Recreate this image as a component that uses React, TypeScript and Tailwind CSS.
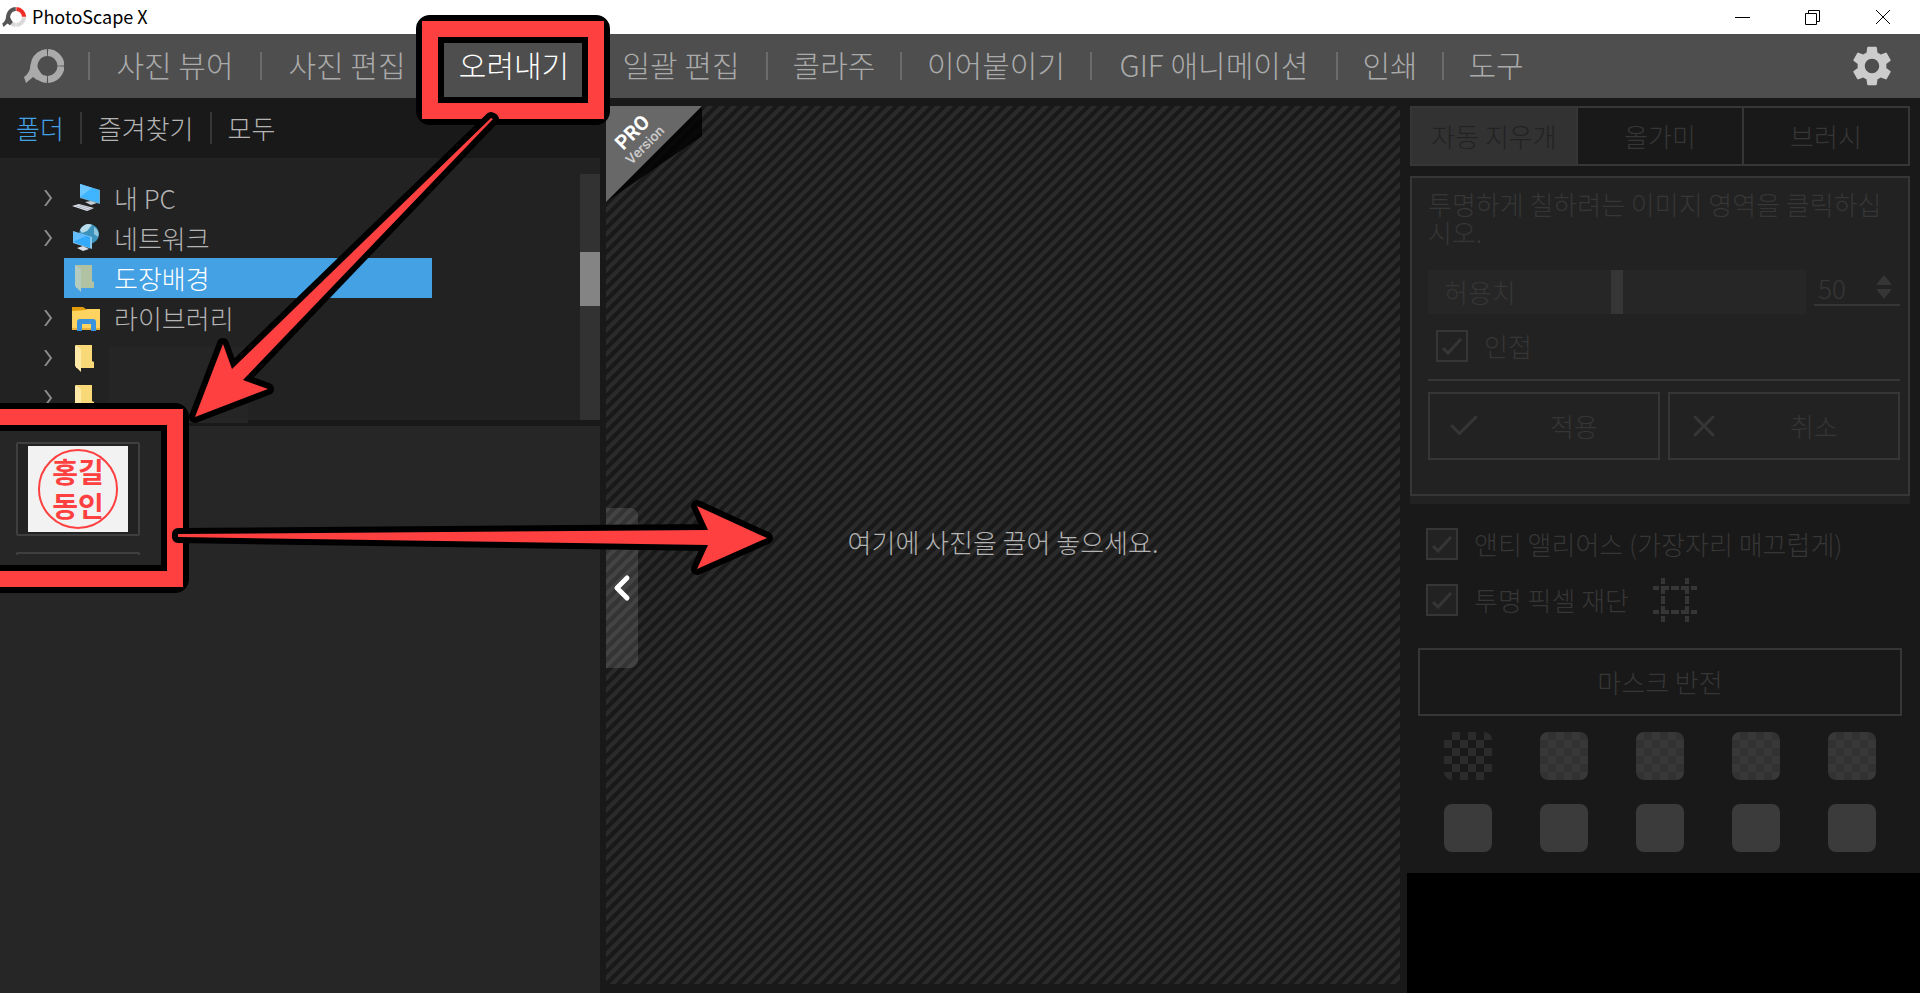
import { useState } from "react";
import { Check, ChevronLeft, X } from "lucide-react";
import { MdSettings } from "react-icons/md";

const menu = [
  { label: "사진 뷰어", width: "w-[172px]" },
  { label: "사진 편집", width: "w-[172px]" },
  { label: "오려내기", width: "w-[162px]" },
  { label: "일괄 편집", width: "w-[172px]" },
  { label: "콜라주", width: "w-[134px]" },
  { label: "이어붙이기", width: "w-[190px]" },
  { label: "GIF 애니메이션", width: "w-[246px]" },
  { label: "인쇄", width: "w-[106px]" },
  { label: "도구", width: "w-[106px]" },
];

const tree = [
  { label: "내 PC", icon: "pc", open: true },
  { label: "네트워크", icon: "network", open: true },
  { label: "도장배경", icon: "folder", open: false },
  { label: "라이브러리", icon: "library", open: true },
  { label: "", icon: "folder", open: true },
  { label: "", icon: "folder", open: true },
];

const tools = ["자동 지우개", "올가미", "브러시"];

function Logo({ className, colors }: { className: string; colors: string[] }) {
  return (
    <svg viewBox="0 0 40 34" className={className} aria-hidden>
      <g fill="none" strokeWidth="7">
        <path d="M24 3.500A13.500 13.500 0 0 1 37 16.500" stroke={colors[1]} />
        <path d="M37 17.500A13.500 13.500 0 0 1 24 30.500" stroke={colors[2]} />
        <path d="M23 30.500A13.500 13.500 0 0 1 13.500 26" stroke={colors[2]} />
        <path d="M23 3.500A13.500 13.500 0 0 0 14 26.500" stroke={colors[0]} />
      </g>
      <path d="M6.500 16Q6 24 0 28L2 34L9 28L13 31L18 26L13 18Z" fill={colors[0]} />
    </svg>
  );
}

function TreeIcon({ type, faded }: { type: string; faded: boolean }) {
  if (type === "pc") {
    return (
      <svg viewBox="0 0 28 28" className="h-7 w-7" aria-hidden>
        <path d="M8 0L28 6V20L8 14Z" fill="#6fa9c9" />
        <path d="M8 0L27 6V19L8 13Z" fill="#3fb4ff" />
        <path d="M8 0L20 4L8 13Z" fill="#6cc6ff" />
        <path d="M13 18L19 17L25 19L19 21Z" fill="#c6ccd6" />
        <path d="M0 22L7 20L22 24L15 27Z" fill="#e3e6ee" />
        <path d="M4 22L17 26M7 21L20 25" stroke="#a6adba" />
      </svg>
    );
  }
  if (type === "network") {
    return (
      <svg viewBox="0 0 28 28" className="h-7 w-7" aria-hidden>
        <circle cx="17" cy="10" r="10" fill="#3c93bd" />
        <path d="M8 6C11 0 17 -1 20 1L15 7L10 9Z" fill="#b7dbe8" />
        <path d="M22 3C27 6 27 10 26 13L22 10Z" fill="#90c7dc" />
        <path d="M1 7L20 13V25L1 19Z" fill="#8ac8ee" />
        <path d="M1 8L18 13V24L1 18Z" fill="#35a9fa" />
        <path d="M1 8L14 12L1 18Z" fill="#62bdff" />
        <path d="M5 24L11 22L17 25L11 27Z" fill="#d9dde6" />
      </svg>
    );
  }
  if (type === "library") {
    return (
      <svg viewBox="0 0 28 28" className="h-7 w-7" aria-hidden>
        <path d="M0 3H11L14 5V8H0Z" fill="#e29c0b" />
        <path d="M0 7L13 6L15 5H28V26H0Z" fill="#ffd35f" />
        <path d="M0 24H28V26H0Z" fill="#e8b23a" />
        <path d="M5 27V18Q5 15 8 15H21Q24 15 24 18V27H19V20H10V27Z" fill="#3a93dc" />
      </svg>
    );
  }
  return (
    <svg viewBox="0 0 28 28" className={faded ? "h-7 w-7 opacity-60" : "h-7 w-7"} aria-hidden>
      <path d="M4 1H20V17L22 18V24H4Z" fill="#f9d877" />
      <path d="M3 1L9 5V28L3 22Z" fill="#ffe9a8" />
    </svg>
  );
}

function Tick({ id, label }: { id: string; label: string }) {
  return (
    <div className="flex items-center gap-4">
      <span className="grid h-8 w-8 shrink-0">
        <input
          id={id}
          type="checkbox"
          defaultChecked
          className="peer col-start-1 row-start-1 h-8 w-8 appearance-none border-2 border-[#363636] bg-[#222222]"
        />
        <svg
          viewBox="0 0 32 32"
          className="pointer-events-none invisible col-start-1 row-start-1 h-8 w-8 peer-checked:visible"
          aria-hidden
        >
          <path d="M7 18L12 23L25 9" fill="none" stroke="#363636" strokeWidth="3" />
        </svg>
      </span>
      <label htmlFor={id}>{label}</label>
    </div>
  );
}

function Browser() {
  return (
    <aside className="relative mr-1.5 flex w-[600px] shrink-0 flex-col text-[26px] leading-8 font-light text-[#b4b4b4]">
      <div className="flex h-[60px] items-center gap-4 pl-4">
        <button className="text-[#44a1e4]">폴더</button>
        <span className="h-8 w-0.5 bg-[#363636]" />
        <button>즐겨찾기</button>
        <span className="h-8 w-0.5 bg-[#363636]" />
        <button>모두</button>
      </div>
      <div className="flex h-[262px] overflow-hidden bg-[#222222] pt-4">
        <ul className="min-w-0 flex-1 pt-1">
          {tree.map((item, i) => {
            const selected = item.label === "도장배경";
            return (
              <li key={i} className="flex h-10 items-center">
                <span className="flex w-16 justify-end pr-3">
                  {item.open && (
                    <svg viewBox="0 0 8 16" className="h-4 w-2" aria-hidden>
                      <path d="M1 0L7 8L1 16" fill="none" stroke="#8c8c8c" strokeWidth="2" />
                    </svg>
                  )}
                </span>
                <button
                  className={
                    selected
                      ? "flex h-10 w-[368px] items-center gap-3.5 bg-[#44a1e4] pl-2 text-white"
                      : "flex h-10 w-[368px] items-center gap-3.5 pl-2"
                  }
                >
                  <TreeIcon type={item.icon} faded={selected} />
                  {item.label}
                </button>
              </li>
            );
          })}
        </ul>
        <div className="w-5 bg-[#323232] pt-[78px]">
          <div className="h-[54px] bg-[#848484]" />
        </div>
      </div>
      <div className="mt-1.5 flex-1 bg-[#262626] px-4 pt-4">
        <figure className="flex h-[94px] w-[124px] items-center justify-center rounded-xs border-2 border-[#3f3f3f] bg-[#222222]">
          <div className="flex h-[86px] w-[100px] items-center justify-center bg-[#f2f2f2]">
            <div className="flex h-20 w-20 flex-col items-center justify-center rounded-full border-2 border-[#ff4040] pt-1 font-['Liberation_Sans','Noto_Sans_CJK_KR',sans-serif] text-[28px] leading-[34px] font-bold text-[#ff4040]">
              <span>홍길</span>
              <span>동인</span>
            </div>
          </div>
        </figure>
        <div className="mt-4 h-[3px] w-[124px] rounded-t-xs border-2 border-b-0 border-[#3f3f3f]" />
      </div>
      {/* patch that hides the private folder names */}
      <div className="absolute top-[249px] left-[109px] h-[76px] w-[139px] bg-[#252525]" />
    </aside>
  );
}

function Canvas() {
  return (
    <main className="relative mt-2 mr-[7px] mb-[9px] flex min-w-0 flex-1 items-center justify-center bg-[linear-gradient(135deg,#191919_25%,#2a2a2a_25%,#2a2a2a_50%,#191919_50%,#191919_75%,#2a2a2a_75%)] bg-size-[12px_12px]">
      <svg viewBox="0 0 96 96" className="absolute top-0 left-0 h-24 w-24" aria-hidden>
        <path d="M96 0V30L0 96Z" fill="#000000" fillOpacity="0.8" />
        <path d="M0 0H96L0 96Z" fill="#686868" />
        <g
          transform="rotate(-45)"
          textAnchor="middle"
          className="font-['Roboto',sans-serif]"
        >
          <text x="0" y="44" fill="#ffffff" className="text-[20px] font-bold">
            PRO
          </text>
          <text x="0" y="60" fill="#cccccc" className="text-[14px] font-medium">
            Version
          </text>
        </g>
      </svg>
      <p className="pb-2 text-[26px] font-light text-[#b4b4b4]">여기에 사진을 끌어 놓으세요.</p>
      <button
        aria-label="패널 접기"
        className="absolute top-[402px] left-0 flex h-40 w-8 items-center justify-center rounded-r-lg bg-white/12 text-white"
      >
        <ChevronLeft className="h-10 w-10 shrink-0" strokeWidth={3} />
      </button>
    </main>
  );
}

function Settings() {
  const [tool, setTool] = useState(tools[0]);

  return (
    <aside className="flex w-[513px] shrink-0 flex-col text-[26px] leading-7 font-light text-[#363636]">
      <div className="pt-2 pr-2.5 pl-[3px]">
        <div className="grid h-[60px] grid-cols-3 gap-0.5 border-2 border-[#363636] bg-[#363636]">
          {tools.map((name) => (
            <button
              key={name}
              onClick={() => setTool(name)}
              className={name === tool ? "bg-[#323232] text-[#222222]" : "bg-[#191919]"}
            >
              {name}
            </button>
          ))}
        </div>

        <section className="mt-2.5 border-b-8 border-[#222222]">
          <div className="h-80 border-2 border-[#363636] bg-[#222222] pt-3 pr-2 pl-4">
            <p className="h-20 break-all">
              투명하게 칠하려는 이미지 영역을 클릭하십시오.
            </p>
            <div className="flex gap-2">
              <div className="relative h-11 flex-1">
                <input
                  id="tolerance"
                  type="range"
                  defaultValue={50}
                  className="block h-11 w-full appearance-none bg-[#262626] [&::-webkit-slider-thumb]:h-11 [&::-webkit-slider-thumb]:w-3 [&::-webkit-slider-thumb]:appearance-none [&::-webkit-slider-thumb]:bg-[#363636]"
                />
                <label htmlFor="tolerance" className="pointer-events-none absolute top-2 left-4">
                  허용치
                </label>
              </div>
              <div className="flex h-9 w-[86px] items-center justify-between border-b-2 border-[#363636] pr-2 pl-1">
                <input
                  aria-label="허용치 값"
                  type="number"
                  defaultValue={50}
                  className="h-8 w-12 appearance-none bg-transparent [-moz-appearance:textfield] [&::-webkit-inner-spin-button]:appearance-none"
                />
                <svg viewBox="0 0 16 24" className="h-6 w-4 shrink-0" fill="#363636" aria-hidden>
                  <path d="M8 0L16 10H0Z" />
                  <path d="M8 24L16 14H0Z" />
                </svg>
              </div>
            </div>
            <div className="mt-4 mb-[17px] pl-2">
              <Tick id="adjacent" label="인접" />
            </div>
            <div className="grid grid-cols-2 gap-2 border-t-2 border-[#363636] pt-[11px]">
              <button className="flex h-17 items-center border-2 border-[#363636] pl-4">
                <Check className="h-9 w-9" strokeWidth={2} />
                <span className="flex-1 pl-2">적용</span>
              </button>
              <button className="flex h-17 items-center border-2 border-[#363636] pl-4">
                <X className="h-9 w-9" strokeWidth={2} />
                <span className="flex-1 pl-2">취소</span>
              </button>
            </div>
          </div>
        </section>

        <div className="mt-6 flex flex-col gap-6 pl-4">
          <Tick id="antialias" label="앤티 앨리어스 (가장자리 매끄럽게)" />
          <div className="flex h-8 items-center gap-6">
            <Tick id="trim" label="투명 픽셀 재단" />
            <svg viewBox="0 0 44 44" className="h-11 w-11" fill="#363636" aria-hidden>
              <path d="M8 0h4v6h-4zM32 0h4v6h-4zM8 38h4v6h-4zM32 38h4v6h-4z" />
              <path d="M0 8h6v4H0zM38 8h6v4h-6zM0 32h6v4H0zM38 32h6v4h-6z" />
              <path d="M8 8h8v4h-4v4H8zM28 8h8v8h-4v-4h-4zM8 28h4v4h4v4H8zM32 28h4v8h-8v-4h4z" />
              <path d="M18 8h8v4h-8zM18 32h8v4h-8zM8 18h4v8H8zM32 18h4v8h-4z" />
            </svg>
          </div>
        </div>

        <div className="px-2 pt-8">
          <button className="h-17 w-full border-2 border-[#363636]">마스크 반전</button>
          <div className="grid grid-cols-5 gap-y-6 px-0.5 pt-4 pb-[21px]">
            {Array.from({ length: 10 }, (_, i) => (
              <button
                key={i}
                aria-label={`배경 ${i + 1}`}
                className={
                  i === 0
                    ? "mx-auto h-12 w-12 rounded-lg bg-[conic-gradient(#2b2b2b_25%,#191919_25%,#191919_50%,#2b2b2b_50%,#2b2b2b_75%,#191919_75%)] bg-size-[16px_16px]"
                    : i < 5
                      ? "mx-auto h-12 w-12 rounded-lg bg-[conic-gradient(#323232_25%,#383838_25%,#383838_50%,#323232_50%,#323232_75%,#383838_75%)] bg-size-[16px_16px]"
                      : "mx-auto h-12 w-12 rounded-lg bg-[#3b3b3b]"
                }
              />
            ))}
          </div>
        </div>
      </div>
      <div className="flex-1 bg-black" />
    </aside>
  );
}

/* Red frames and arrows of the tutorial, drawn over the window */
function Annotations() {
  return (
    <svg
      viewBox="0 0 800 610"
      className="pointer-events-none absolute top-0 left-0 h-[610px] w-[800px]"
      aria-hidden
    >
      <g fill="none" strokeLinejoin="round">
        <rect x="430" y="29" width="166" height="82" stroke="#000000" strokeWidth="28" />
        <rect x="430" y="29" width="166" height="82" stroke="#ff4040" strokeWidth="16" strokeLinejoin="miter" />
        <rect x="-20" y="417" width="195" height="162" stroke="#000000" strokeWidth="28" />
        <rect x="-20" y="417" width="195" height="162" stroke="#ff4040" strokeWidth="16" strokeLinejoin="miter" />
      </g>
      <g stroke="#000000" strokeWidth="12" strokeLinejoin="round">
        <path d="M491 118L232 369L223 344L195 417L268 389L243 380L493 119Z" />
        <path d="M178 534L708 530L697 506L767 538L697 569L708 545L178 537Z" />
      </g>
      <g fill="#ff4040">
        <path d="M491 118L232 369L223 344L195 417L268 389L243 380L493 119Z" />
        <path d="M178 534L708 530L697 506L767 538L697 569L708 545L178 537Z" />
      </g>
    </svg>
  );
}

export default function App() {
  const [active, setActive] = useState("오려내기");

  return (
    <div className="relative flex min-h-screen flex-col bg-[#191919] font-['Noto_Sans_CJK_KR',sans-serif]">
      <header className="flex h-[34px] items-center bg-white text-black">
        <Logo className="ml-0.5 h-5 w-6" colors={["#555555", "#ee2e24", "#d9d9d9"]} />
        <h1 className="ml-1.5 flex-1 pb-0.5 text-lg">PhotoScape X</h1>
        <button aria-label="최소화" className="w-[70px]">
          <svg viewBox="0 0 16 16" className="mx-auto h-4 w-4" aria-hidden>
            <path d="M0 8.500H15" stroke="currentColor" />
          </svg>
        </button>
        <button aria-label="이전 크기로" className="w-[70px]">
          <svg viewBox="0 0 16 16" className="mx-auto h-4 w-4" fill="none" stroke="currentColor" aria-hidden>
            <path d="M0.500 4.500H11.500V15.500H0.500Z" />
            <path d="M3.500 4V1.500H14.500V12.500H12" />
          </svg>
        </button>
        <button aria-label="닫기" className="mr-0.5 w-[70px]">
          <svg viewBox="0 0 16 16" className="mx-auto h-4 w-4" stroke="currentColor" aria-hidden>
            <path d="M1 1L15 15M15 1L1 15" />
          </svg>
        </button>
      </header>

      <nav className="flex h-16 items-center bg-[#4e4e4e] pr-6 pl-6 text-[30px] leading-9 font-light text-[#aaaaaa]">
        <Logo className="mr-6 h-[34px] w-10" colors={["#aaaaaa", "#aaaaaa", "#aaaaaa"]} />
        <ul className="flex flex-1">
          {menu.map((item) => (
            <li key={item.label} className={`flex items-center ${item.width}`}>
              <span className="h-7 w-0.5 bg-[#6b6b6b]" />
              <button
                onClick={() => setActive(item.label)}
                className={
                  item.label === active
                    ? "flex-1 pb-1 whitespace-nowrap text-white"
                    : "flex-1 pb-1 whitespace-nowrap"
                }
              >
                {item.label}
              </button>
            </li>
          ))}
        </ul>
        <button aria-label="설정" className="text-[#cccccc]">
          <MdSettings className="h-12 w-12" />
        </button>
      </nav>

      <div className="flex flex-1">
        <Browser />
        <Canvas />
        <Settings />
      </div>

      <Annotations />
    </div>
  );
}
